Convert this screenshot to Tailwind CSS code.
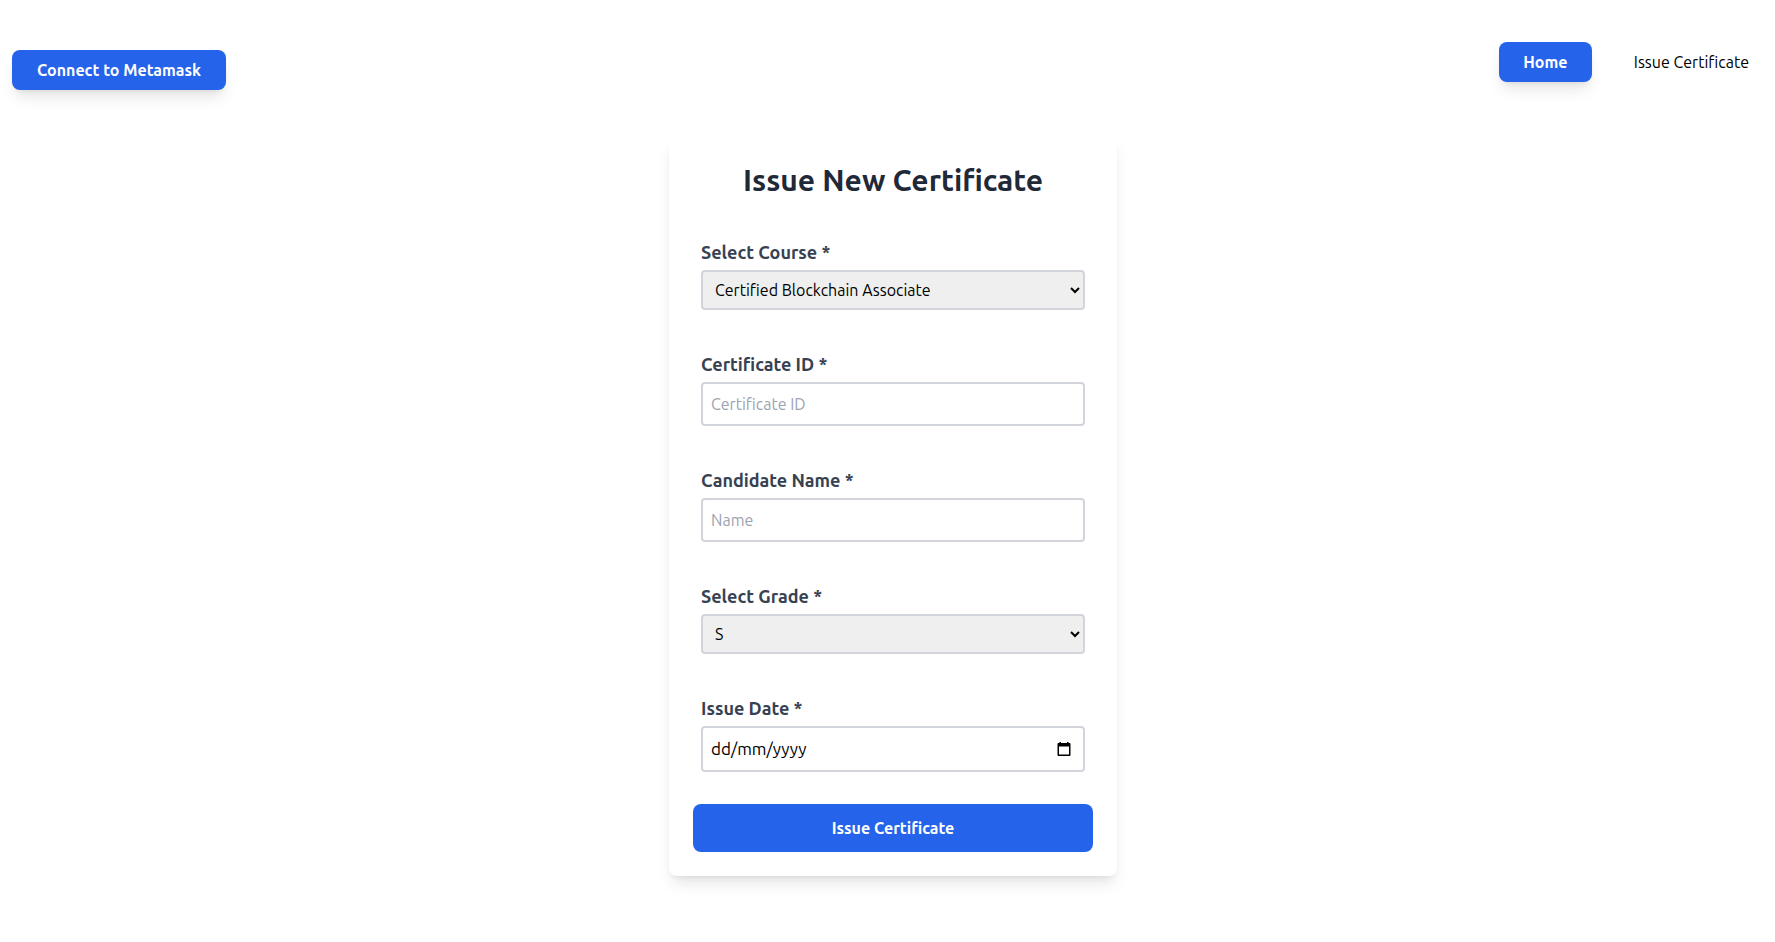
<!DOCTYPE html>
<html lang="en">
<head>
<meta charset="utf-8">
<meta name="viewport" content="width=device-width, initial-scale=1">
<title>Issue New Certificate</title>
<script src="https://cdn.jsdelivr.net/npm/@tailwindcss/browser@4"></script>
</head>
<body class="min-h-screen bg-white pb-16 font-['Ubuntu','Roboto',sans-serif] text-base text-black">
  <header class="flex items-start justify-between pt-[42px] pr-[26px] pl-3">
    <button type="button" class="mt-2 flex h-10 w-[214px] items-center justify-center rounded-lg bg-[#2563eb] font-bold whitespace-nowrap text-white shadow-lg">Connect to Metamask</button>
    <nav class="flex items-center gap-[42px]">
      <a href="#home" class="flex h-10 w-[93px] items-center justify-center rounded-lg bg-[#2563eb] font-bold text-white shadow-lg">Home</a>
      <a href="#issue">Issue Certificate</a>
    </nav>
  </header>

  <main class="flex justify-center pt-[46px] pl-[11px]">
    <form class="w-full max-w-md rounded-lg bg-white p-6 shadow-lg">
      <h1 class="mb-[38px] text-center text-3xl leading-10 font-bold text-[#1f2937]">Issue New Certificate</h1>
      <div class="flex flex-col gap-10 px-2">
        <div class="flex flex-col gap-1">
          <label for="course" class="text-lg leading-7 font-bold text-[#374151]">Select Course *</label>
          <select id="course" class="h-10 w-full rounded-sm border-2 border-[#d1d5db] bg-[#efefef] px-2">
            <option>Certified Blockchain Associate</option>
          </select>
        </div>
        <div class="flex flex-col gap-1">
          <label for="cert-id" class="text-lg leading-7 font-bold text-[#374151]">Certificate ID *</label>
          <input id="cert-id" type="text" placeholder="Certificate ID" class="h-11 w-full rounded-sm border-2 border-[#d1d5db] px-2 placeholder:text-[#9ca3af]">
        </div>
        <div class="flex flex-col gap-1">
          <label for="name" class="text-lg leading-7 font-bold text-[#374151]">Candidate Name *</label>
          <input id="name" type="text" placeholder="Name" class="h-11 w-full rounded-sm border-2 border-[#d1d5db] px-2 placeholder:text-[#9ca3af]">
        </div>
        <div class="flex flex-col gap-1">
          <label for="grade" class="text-lg leading-7 font-bold text-[#374151]">Select Grade *</label>
          <select id="grade" class="h-10 w-full rounded-sm border-2 border-[#d1d5db] bg-[#efefef] px-2">
            <option>S</option>
          </select>
        </div>
        <div class="flex flex-col gap-1">
          <label for="date" class="text-lg leading-7 font-bold text-[#374151]">Issue Date *</label>
          <div class="flex h-[46px] items-center rounded-sm border-2 border-[#d1d5db] pr-3 pl-2">
            <input id="date" type="text" placeholder="dd/mm/yyyy" class="min-w-0 flex-1 text-[17px] outline-none placeholder:text-black">
            <button type="button" aria-label="Open calendar">
              <svg class="block" width="14" height="14" viewBox="0 0 14 14" fill="none"><path d="M0.500 2Q0.500 1 1.500 1H2.500V0H4V1H10V0H11.500V1H12.500Q13.500 1 13.500 2V13Q13.500 14 12.500 14H1.500Q0.500 14 0.500 13ZM2 4.500V12.500H12V4.500Z" fill="#000" fill-rule="evenodd"/></svg>
            </button>
          </div>
        </div>
      </div>
      <button type="submit" class="mt-8 h-12 w-full rounded-lg bg-[#2563eb] font-bold text-white">Issue Certificate</button>
    </form>
  </main>
</body>
</html>
